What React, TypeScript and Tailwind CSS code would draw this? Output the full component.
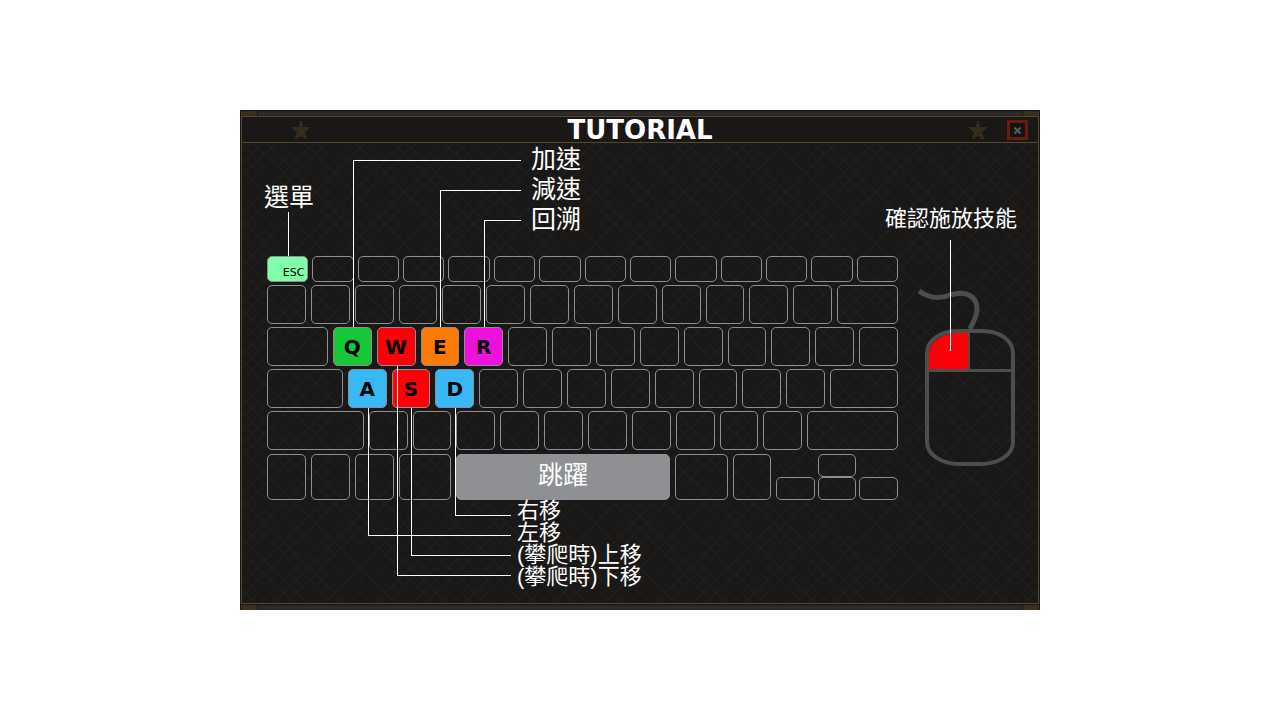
import React from "react";

type KeySpec = {
  grow: string;
  label?: string;
  fill?: string;
};

// Grow factors count the area inside each key's one-pixel border.
const UNIT = "grow-37";

const blank = (count: number): KeySpec[] =>
  Array.from({ length: count }, () => ({ grow: UNIT }));

const letter = (label: string, fill: string): KeySpec => ({
  grow: UNIT,
  label,
  fill,
});

const numberRow: KeySpec[] = [...blank(13), { grow: "grow-59" }];

const upperRow: KeySpec[] = [
  { grow: "grow-59" },
  letter("Q", "bg-[#18c738]"),
  letter("W", "bg-[#ff0008]"),
  letter("E", "bg-[#ff7a00]"),
  letter("R", "bg-[#f010dc]"),
  ...blank(9),
];

const homeRow: KeySpec[] = [
  { grow: "grow-74" },
  letter("A", "bg-[#38b8f5]"),
  letter("S", "bg-[#ff0008]"),
  letter("D", "bg-[#38b8f5]"),
  ...blank(8),
  { grow: "grow-66" },
];

const lowerRow: KeySpec[] = [{ grow: "grow-95" }, ...blank(10), { grow: "grow-89" }];

function Key({ spec }: { spec: KeySpec }) {
  return (
    <div
      className={`flex min-w-0 basis-0 items-center justify-center rounded-[5px] border border-[#8c9096] ${spec.grow} ${spec.fill ?? ""}`}
    >
      {spec.label && (
        <span className="font-['DejaVu_Sans',sans-serif] text-[20px] leading-none font-bold text-black">
          {spec.label}
        </span>
      )}
    </div>
  );
}

function KeyRow({ keys }: { keys: KeySpec[] }) {
  return (
    <div className="flex h-[39px] gap-[5px]">
      {keys.map((spec, i) => (
        <Key key={i} spec={spec} />
      ))}
    </div>
  );
}

function Keyboard() {
  return (
    <div className="flex min-w-0 flex-1 flex-col gap-[3px]">
      <div className="grid h-[26px] grid-cols-14 gap-1">
        <div className="flex items-end justify-end rounded-[5px] border border-[#8c9096] bg-[#80ffa8] px-[3px] pb-[2px]">
          <span className="font-['DejaVu_Sans',sans-serif] text-[11px] leading-[12px] text-black">ESC</span>
        </div>
        {Array.from({ length: 13 }, (_, i) => (
          <div key={i} className="rounded-[5px] border border-[#8c9096]" />
        ))}
      </div>
      <KeyRow keys={numberRow} />
      <KeyRow keys={upperRow} />
      <KeyRow keys={homeRow} />
      <KeyRow keys={lowerRow} />
      <div className="mt-px flex h-[46px] gap-[5px]">
        <Key spec={{ grow: "grow-37" }} />
        <Key spec={{ grow: "grow-37" }} />
        <Key spec={{ grow: "grow-37" }} />
        <Key spec={{ grow: "grow-50" }} />
        <div className="flex min-w-0 grow-213 basis-0 justify-center rounded-[5px] border border-[#8e9094] bg-[#8e9094] pt-[5px] text-[25px] leading-[30px]">
          跳躍
        </div>
        <Key spec={{ grow: "grow-51" }} />
        <Key spec={{ grow: "grow-36" }} />
        <div className="grid min-w-0 grow-122 basis-0 grid-cols-3 grid-rows-2 gap-x-[3px]">
          <div className="col-start-2 rounded-[5px] border border-[#8c9096]" />
          <div className="col-start-1 row-start-2 rounded-[5px] border border-[#8c9096]" />
          <div className="row-start-2 rounded-[5px] border border-[#8c9096]" />
          <div className="row-start-2 rounded-[5px] border border-[#8c9096]" />
        </div>
      </div>
    </div>
  );
}

function Mouse() {
  return (
    <svg
      viewBox="917 285 100 185"
      className="mt-[29px] h-[185px] w-[100px] shrink-0"
      fill="none"
      stroke="#4d4d4d"
      aria-hidden="true"
    >
      <path d="M968 333H957C942 333 929 342 929 354V369H968Z" fill="#ff0008" stroke="none" />
      <path d="M919 291C930 299 940 299 950 295C966 290 977 296 977 309C977 317 973 322 970 329" strokeWidth="5" />
      <path
        d="M957 331H983C1000 331 1013 341 1013 353V442C1013 455 998 464 981 464H959C942 464 927 455 927 442V353C927 341 940 331 957 331Z"
        strokeWidth="4"
      />
      <path d="M927 370.5H1013" strokeWidth="3" />
      <path d="M969 331V370" strokeWidth="2" />
    </svg>
  );
}

function Star() {
  return (
    <svg viewBox="0 0 20 20" className="h-5 w-5" fill="#362c1c" shapeRendering="crispEdges" aria-hidden="true">
      <path d="M10 0L12.5 7H20L14 12L16.5 20L10 15.5L3.500 20L6 12L0 7H7.500Z" />
    </svg>
  );
}

function FrameBar() {
  return (
    <div className="flex h-[6px] border border-b-0 border-[#1a1816] bg-[#1a1816]">
      <div className="w-4 bg-[#3a2f1a]" />
      <div className="mx-px flex-1 bg-linear-to-b from-[#262322] via-[#302c2b] to-[#262322]" />
      <div className="w-4 bg-[#3a2f1a]" />
    </div>
  );
}

function Connectors() {
  return (
    <svg
      viewBox="240 110 800 500"
      className="pointer-events-none absolute inset-0 h-full w-full"
      fill="none"
      stroke="#ffffff"
      shapeRendering="crispEdges"
      aria-hidden="true"
    >
      <path d="M288.500 212V256" />
      <path d="M521 160.500H353.500V327" />
      <path d="M521 190.500H440.500V327" />
      <path d="M521 220.500H484.500V327" />
      <path d="M397.500 366V575.500H511" />
      <path d="M368.500 408V535.500H511" />
      <path d="M411.500 408V555.500H511" />
      <path d="M455.500 408V515.500H511" />
      <path d="M950.500 240V351" />
    </svg>
  );
}

export default function App() {
  return (
    <main className="flex min-h-screen items-center justify-center bg-white">
      <section className="relative w-full max-w-[800px] bg-[#1a1816] font-['Liberation_Sans','Noto_Sans_CJK_TC',sans-serif] text-white">
        <FrameBar />
        <div className="mx-px border border-[#54472b]">
          <header className="grid h-[26px] grid-cols-[1fr_auto_1fr] items-center border-b border-[#54472b]">
            <div className="pl-[49px]">
              <Star />
            </div>
            <h1 className="font-['DejaVu_Sans',sans-serif] text-[26px] leading-[26px] font-bold">TUTORIAL</h1>
            <div className="flex items-center justify-end gap-[19px] pr-[10px]">
              <Star />
              <button
                type="button"
                aria-label="Close"
                className="flex h-[20px] w-[21px] items-center justify-center border-3 border-[#6b1a0e] bg-[#151414]"
              >
                <svg viewBox="0 0 7 7" className="h-[7px] w-[7px]" stroke="#5c5c5c" strokeWidth="2" aria-hidden="true">
                  <path d="M0.500 0.500L6.500 6.500M6.500 0.500L0.500 6.500" />
                </svg>
              </button>
            </div>
          </header>

          <div className="bg-[repeating-linear-gradient(45deg,#201e1c_0_1px,transparent_1px_9px),repeating-linear-gradient(-45deg,#201e1c_0_1px,transparent_1px_9px)]">
            <div className="flex h-[113px] items-start pt-px pr-[21px] pl-[22px] leading-[30px]">
              <p className="mt-[38px] text-[25px]">選單</p>
              <ul className="ml-[217px] text-[25px]">
                <li>加速</li>
                <li>減速</li>
                <li>回溯</li>
              </ul>
              <p className="mt-[60px] ml-auto text-[22px]">確認施放技能</p>
            </div>
            <div className="flex items-start gap-[19px] pr-[21px] pl-[25px]">
              <Keyboard />
              <Mouse />
            </div>
            <ul className="h-[103px] pl-[275px] text-[22px] leading-[22px]">
              <li>右移</li>
              <li>左移</li>
              <li>(攀爬時)上移</li>
              <li>(攀爬時)下移</li>
            </ul>
          </div>
        </div>
        <FrameBar />
        <Connectors />
      </section>
    </main>
  );
}
